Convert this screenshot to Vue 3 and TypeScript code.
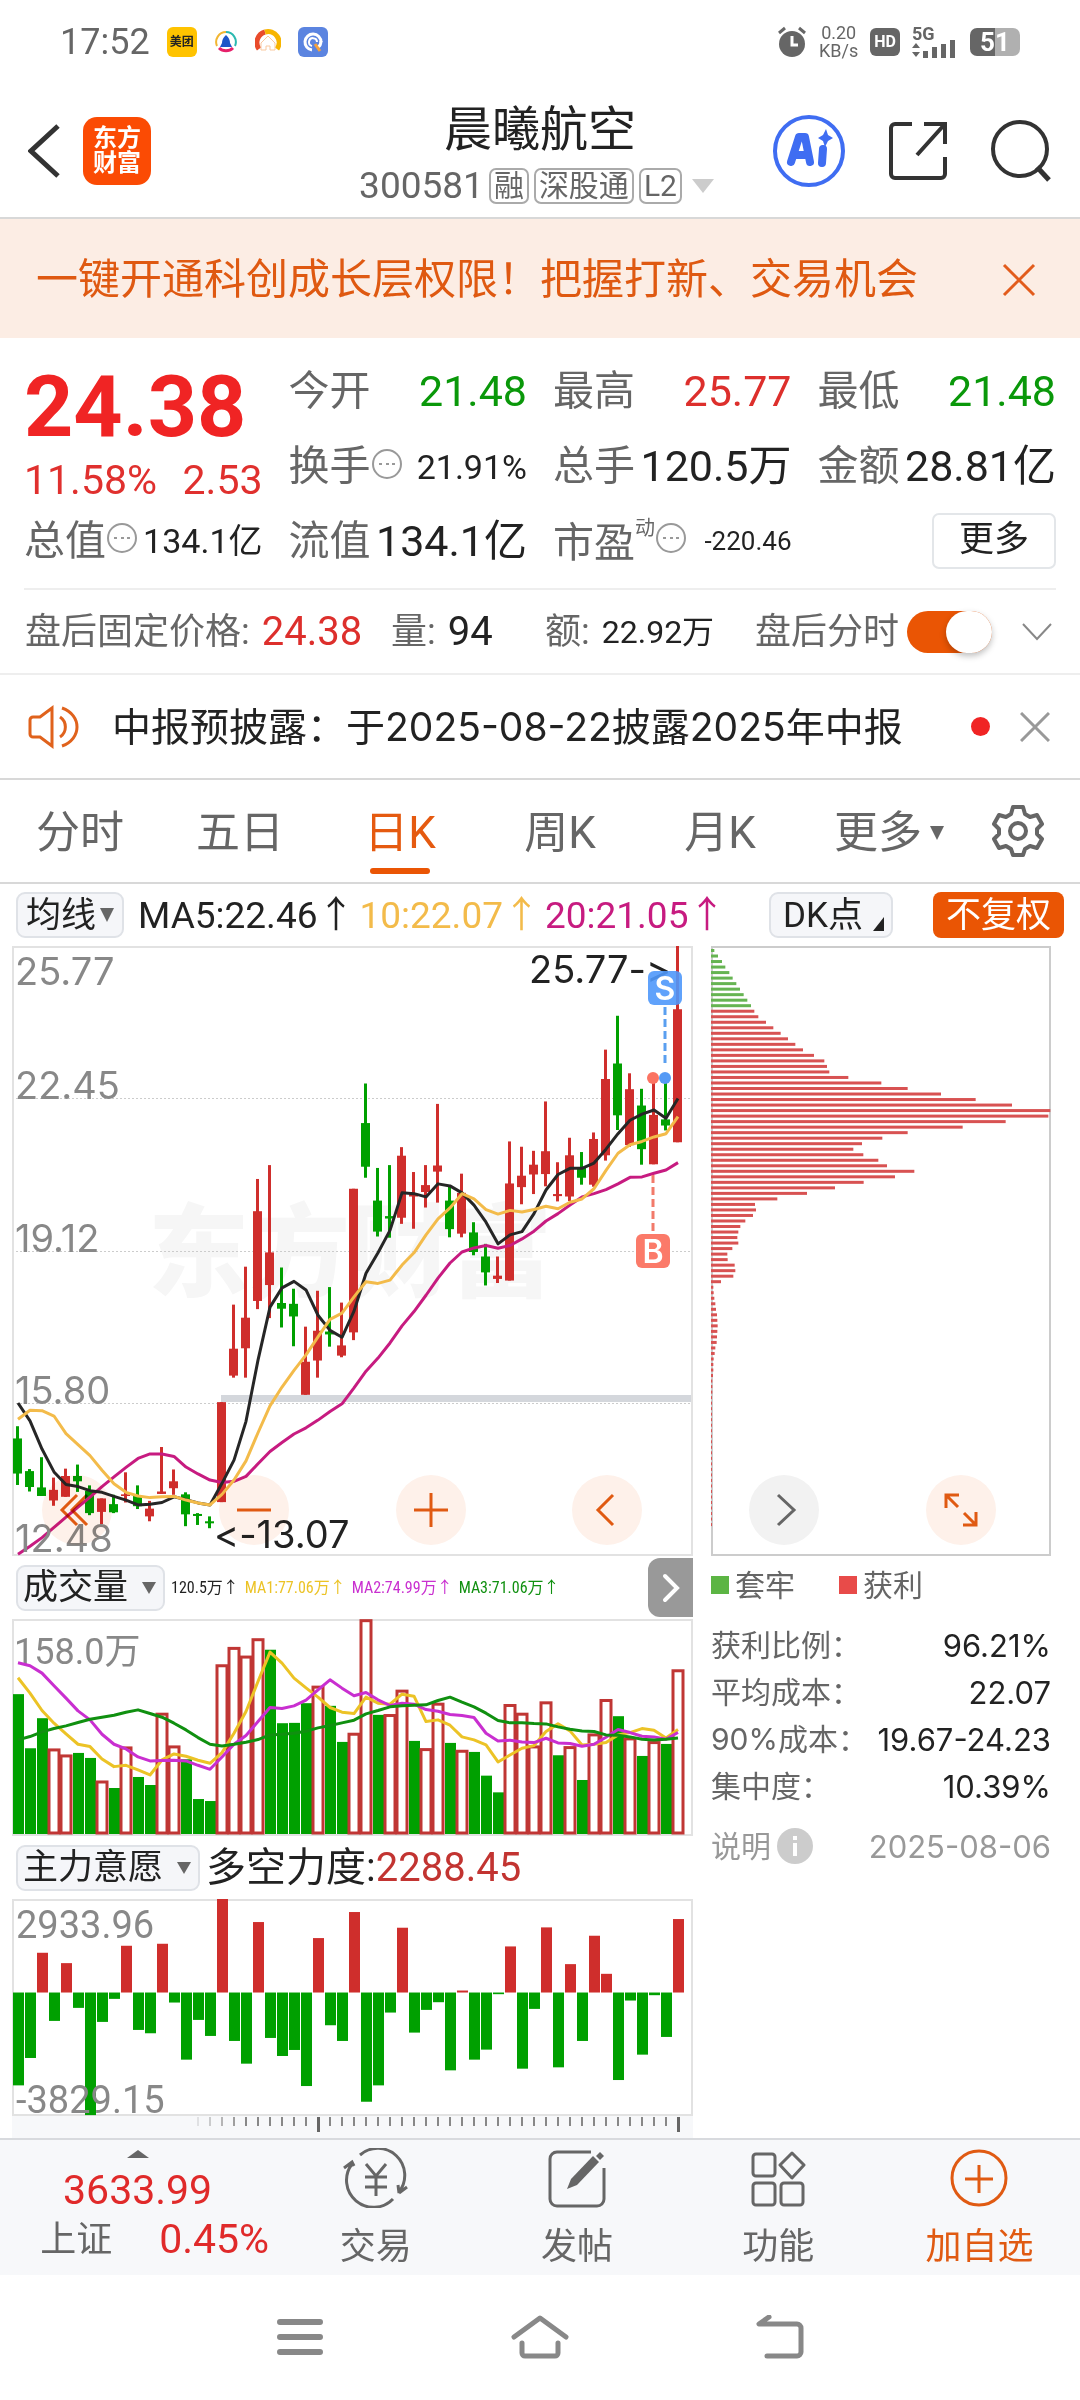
<script setup lang="ts">
import { ref } from 'vue'

type Candle = [top: number, bottom: number, high: number, low: number, up: 0 | 1]

// Every series shares the same column pitch: one column per trading day.
const x = (i: number): number => 6 + i * 12
const priceY = (v: number): number => Math.round((v - 40) * 40.8) / 100
const paneY = (v: number): number => Math.round((v - 178) * 33.4) / 100

const candles: Candle[] = [
  [1247, 1333, 1217, 1361, 0], [1327, 1366, 1322, 1377, 0], [1367, 1388, 1293, 1388, 0], [1373, 1399, 1343, 1412, 1],
  [1339, 1390, 1321, 1390, 1], [1339, 1352, 1311, 1378, 0], [1375, 1430, 1362, 1435, 0], [1394, 1427, 1394, 1457, 1],
  [1408, 1428, 1385, 1430, 0], [1384, 1388, 1330, 1404, 1], [1387, 1413, 1362, 1420, 0], [1419, 1438, 1400, 1450, 1],
  [1377, 1383, 1268, 1383, 1], [1352, 1369, 1323, 1385, 1], [1384, 1433, 1379, 1462, 0], [1432, 1437, 1430, 1459, 0],
  [1450, 1455, 1438, 1467, 0], [1158, 1403, 1158, 1403, 1], [1027, 1093, 919, 1098, 1], [951, 1026, 826, 1098, 1],
  [690, 910, 611, 930, 1], [791, 871, 577, 952, 1], [915, 929, 828, 975, 0], [917, 948, 880, 1021, 0],
  [1059, 1140, 973, 1140, 1], [983, 1056, 885, 1098, 1], [985, 992, 876, 1022, 0], [1019, 1044, 914, 1048, 1],
  [635, 987, 635, 1006, 1], [474, 581, 377, 608, 0], [664, 740, 584, 752, 0], [702, 708, 577, 755, 0],
  [554, 706, 533, 721, 1], [649, 654, 594, 733, 1], [626, 643, 577, 681, 1], [578, 593, 427, 669, 1],
  [664, 734, 627, 754, 0], [645, 745, 598, 754, 1], [742, 790, 717, 798, 0], [801, 840, 770, 872, 0],
  [848, 856, 801, 866, 1], [622, 860, 519, 860, 1], [603, 631, 532, 673, 1], [576, 600, 542, 648, 1],
  [543, 599, 421, 629, 1], [648, 653, 570, 666, 1], [553, 654, 510, 665, 1], [583, 608, 545, 625, 0],
  [513, 625, 497, 630, 1], [366, 553, 294, 566, 1], [328, 455, 211, 491, 0], [391, 528, 352, 532, 1],
  [431, 538, 390, 576, 0], [454, 575, 360, 575, 1], [465, 480, 355, 492, 0], [195, 521, 40, 521, 1],
]

const ma5 = [1160, 1204, 1273, 1329, 1360, 1365, 1375, 1379, 1389, 1398, 1410, 1408, 1404, 1390, 1397, 1405, 1410, 1357, 1300, 1205, 1055, 925, 878, 862, 883, 945, 982, 999, 935, 842, 792, 737, 645, 647, 655, 623, 628, 645, 675, 717, 770, 748, 740, 696, 638, 600, 585, 585, 572, 538, 500, 467, 452, 442, 462, 414]
const ma10 = [1200, 1178, 1179, 1192, 1235, 1262, 1289, 1325, 1358, 1379, 1388, 1392, 1390, 1389, 1398, 1405, 1410, 1384, 1349, 1302, 1233, 1167, 1121, 1080, 1042, 998, 955, 940, 900, 863, 867, 859, 822, 792, 748, 709, 682, 647, 660, 686, 697, 688, 692, 686, 678, 684, 668, 660, 635, 590, 548, 527, 519, 508, 500, 458]
const ma20 = [1531, 1511, 1490, 1465, 1440, 1415, 1391, 1365, 1341, 1318, 1296, 1285, 1285, 1291, 1317, 1334, 1349, 1355, 1352, 1340, 1309, 1279, 1257, 1236, 1221, 1202, 1181, 1162, 1123, 1082, 1050, 1013, 971, 936, 896, 854, 817, 790, 780, 774, 781, 774, 758, 739, 714, 696, 675, 655, 647, 637, 623, 607, 606, 597, 589, 571]

const volume = [403, 565, 475, 567, 585, 579, 594, 663, 684, 561, 651, 675, 460, 558, 598, 717, 723, 315, 263, 289, 237, 270, 490, 489, 430, 379, 438, 546, 520, 180, 465, 464, 391, 543, 566, 430, 549, 571, 576, 647, 697, 434, 460, 558, 426, 586, 560, 660, 522, 419, 469, 534, 588, 545, 552, 330]
const volumeUp = new Set([3, 4, 7, 9, 12, 13, 17, 18, 19, 20, 25, 28, 29, 31, 32, 34, 35, 37, 41, 42, 43, 44, 46, 48, 49, 51, 53, 55])
const vol1 = [354, 400, 452, 490, 522, 553, 560, 597, 620, 616, 630, 645, 600, 582, 589, 601, 610, 578, 520, 455, 365, 277, 310, 355, 384, 412, 443, 457, 461, 412, 430, 433, 403, 409, 485, 480, 496, 531, 540, 555, 606, 585, 565, 557, 515, 492, 513, 555, 553, 548, 525, 518, 506, 511, 534, 509]
const vol2 = [309, 318, 340, 378, 415, 453, 480, 523, 553, 567, 591, 603, 602, 601, 603, 616, 628, 591, 553, 527, 485, 443, 446, 438, 421, 390, 360, 385, 408, 398, 420, 437, 430, 433, 449, 454, 464, 467, 473, 520, 543, 541, 546, 548, 535, 549, 551, 559, 553, 532, 509, 518, 529, 531, 538, 518]
const vol3 = [540, 530, 516, 506, 498, 488, 478, 472, 466, 457, 450, 461, 472, 490, 510, 533, 553, 558, 553, 547, 539, 525, 523, 520, 514, 504, 497, 489, 481, 462, 452, 441, 438, 436, 435, 422, 412, 427, 441, 460, 482, 489, 489, 491, 492, 501, 508, 513, 515, 525, 526, 531, 538, 540, 538, 534]

const force = [736, 654, 339, 543, 370, 504, 825, 546, 477, 318, 570, 580, 312, 488, 659, 540, 588, 178, 603, 671, 247, 594, 648, 630, 738, 295, 556, 603, 217, 785, 736, 518, 264, 578, 510, 487, 691, 452, 659, 629, 463, 320, 686, 507, 263, 682, 373, 603, 288, 402, 720, 482, 644, 466, 591, 238]
const forceZero = 458

const chipLengths = [72, 83, 95, 105, 117, 127, 138, 149, 160, 171, 182, 192, 204, 227, 249, 271, 293, 315, 338, 371, 402, 410, 417, 474, 573, 652, 752, 856, 965, 1080, 1074, 946, 817, 652, 576, 515, 489, 519, 564, 590, 672, 614, 520, 434, 350, 261, 194, 197, 188, 165, 150, 144, 141, 144, 126, 111, 112, 133, 135, 129, 92, 69, 70, 72, 75, 77, 80, 81, 82, 81, 80, 79, 75, 73, 70, 69, 69, 68, 66, 66, 66]
const trappedCount = 11
const chips = Array.from({ length: 105 }, (_, i) => ((chipLengths[i] ?? 65) - 62) / 3)

const line = (values: number[], y: (v: number) => number): string =>
  values.map((v, i) => `${x(i)},${y(v)}`).join(' ')

const ticks = Array.from({ length: 41 }, (_, i) => ({
  x: 186 + i * 12,
  long: i === 10 || i === 40,
  opacity: Math.min(1, 0.2 + i * 0.2),
}))

const tabs = ['分时', '五日', '日K', '周K', '月K']
const activeTab = ref('日K')
const afterHours = ref(true)

const stats = [
  ['获利比例：', '96.21%'],
  ['平均成本：', '22.07'],
  ['90%成本：', '19.67-24.23'],
  ['集中度：', '10.39%'],
]
</script>

<template>
  <div class="page">
    <div class="status">
      <span class="clock">17:52</span>
      <span class="meituan">美团</span>
      <svg width="24" height="36" viewBox="0 0 24 36" fill="none">
        <path d="M12 8a10 10 0 0 0-9 14" stroke="#f2b632" stroke-width="2" />
        <path d="M12 8a10 10 0 0 1 9 14" stroke="#2bb9b0" stroke-width="2" />
        <path d="M5 24a10 10 0 0 0 14 0" stroke="#e6206a" stroke-width="3" />
        <path d="M12 11c3 3 4 5 4 8l2 4H6l2-4c0-3 1-5 4-8z" fill="#1c56c8" />
      </svg>
      <svg width="26" height="36" viewBox="0 0 26 36" fill="none">
        <path d="M4 25A11 11 0 0 1 10 8" stroke="#e94b2b" stroke-width="5" />
        <path d="M10 8a11 11 0 0 1 12 17" stroke="#f7b500" stroke-width="5" />
        <path d="M6 19l7-7 7 7v7h-5v-4h-4v4H6z" fill="#fff" stroke="#f9c9a0" stroke-width="1" />
      </svg>
      <svg width="30" height="30" viewBox="0 0 30 30" fill="none">
        <rect width="30" height="30" rx="6" fill="#5b84e0" />
        <path d="M14 23a8 8 0 1 1 9-8" stroke="#fff" stroke-width="3" />
        <path d="M14 19a4 4 0 1 1 5-4" stroke="#fff" stroke-width="2" />
        <path d="M23 14c0 3-1 5-3 6" stroke="#fff" stroke-width="3" />
        <path d="M17 17l5 7" stroke="#f7a23b" stroke-width="3" />
      </svg>
      <div class="status-right">
        <svg width="30" height="32" viewBox="0 0 30 32">
          <path d="M2 7l6-5M28 7l-6-5" stroke="#666" stroke-width="3" />
          <circle cx="15" cy="18" r="13" fill="#666" />
          <path d="M15 10v9h6" fill="none" stroke="#fff" stroke-width="3" />
        </svg>
        <span class="speed">0.20<br />KB/s</span>
        <span class="hd">HD</span>
        <svg class="signal" width="46" height="34" viewBox="0 0 46 34" fill="#666">
          <text x="0" y="15" class="five-g">5G</text>
          <path d="M4 18l4 5H0zM4 32l-4-5h8z" />
          <path d="M11 26h5v7h-5zM20 22h5v11h-5zM29 19h5v14h-5zM38 15h5v18h-5z" />
        </svg>
        <span class="battery"><b>51</b></span>
      </div>
    </div>

    <header class="header">
      <button class="bare" aria-label="返回">
        <svg width="32" height="54" viewBox="0 0 32 54" fill="none">
          <path d="M30 2L3 27l27 25" stroke="#333" stroke-width="5" />
        </svg>
      </button>
      <a class="logo" href="#">东方<br />财富</a>
      <div class="title">
        <h1>晨曦航空</h1>
        <div class="code">
          <span>300581</span><i>融</i><i>深股通</i><i>L2</i>
          <svg width="24" height="16" viewBox="0 0 24 16"><path d="M1 1h22L12 15z" fill="#ccc" /></svg>
        </div>
      </div>
      <div class="tools">
        <button class="bare" aria-label="AI">
          <svg width="74" height="74" viewBox="0 0 74 74" fill="none">
            <circle cx="37" cy="37" r="34" stroke="#3f6df2" stroke-width="4" />
            <path d="M19 48l8-25h6l5 25M24 41h11" stroke="#3f6df2" stroke-width="8" stroke-linejoin="round" stroke-linecap="round" />
            <path d="M51 35l-1 14" stroke="#3f6df2" stroke-width="8" stroke-linecap="round" />
            <path d="M54 15l2 6 5 3-5 3-3 6-2-6-5-3 5-3z" fill="#3f6df2" />
          </svg>
        </button>
        <button class="bare" aria-label="分享">
          <svg width="60" height="60" viewBox="0 0 60 60" fill="none" stroke="#333" stroke-width="4">
            <path d="M24 3H7a4 4 0 0 0-4 4v46a4 4 0 0 0 4 4h46a4 4 0 0 0 4-4V36" />
            <path d="M36 3h21v20M56 4L29 34" />
          </svg>
        </button>
        <button class="bare" aria-label="搜索">
          <svg width="62" height="62" viewBox="0 0 62 62" fill="none" stroke="#333" stroke-width="4">
            <circle cx="30" cy="29" r="27" />
            <path d="M47 47l12 13" stroke-width="5" />
          </svg>
        </button>
      </div>
    </header>

    <div class="banner">
      <a href="#">一键开通科创成长层权限！把握打新、交易机会</a>
      <button class="bare" aria-label="关闭">
        <svg width="34" height="34" viewBox="0 0 34 34"><path d="M2 2l30 30M32 2L2 32" stroke="#e25c1c" stroke-width="3" /></svg>
      </button>
    </div>

    <section class="quote">
      <div class="last">
        <strong>24.38</strong>
        <div class="change"><span>11.58%</span><span>2.53</span></div>
      </div>
      <div class="cell"><span>今开</span><b class="green">21.48</b></div>
      <div class="cell"><span>最高</span><b class="red">25.77</b></div>
      <div class="cell"><span>最低</span><b class="green">21.48</b></div>
      <div class="cell">
        <span>换手</span>
        <svg class="more-dot" viewBox="0 0 32 32"><circle cx="16" cy="16" r="14" /><path d="M8 16h3M15 16h3M21 16h3" /></svg>
        <b class="mid">21.91%</b>
      </div>
      <div class="cell"><span>总手</span><b>120.5万</b></div>
      <div class="cell"><span>金额</span><b>28.81亿</b></div>
      <div class="cell">
        <span>总值</span>
        <svg class="more-dot" viewBox="0 0 32 32"><circle cx="16" cy="16" r="14" /><path d="M8 16h3M15 16h3M21 16h3" /></svg>
        <b class="mid">134.1亿</b>
      </div>
      <div class="cell"><span>流值</span><b>134.1亿</b></div>
      <div class="cell">
        <span>市盈<sup>动</sup></span>
        <svg class="more-dot" viewBox="0 0 32 32"><circle cx="16" cy="16" r="14" /><path d="M8 16h3M15 16h3M21 16h3" /></svg>
        <b class="small">-220.46</b>
      </div>
      <div class="cell end"><button class="more">更多</button></div>
    </section>

    <section class="after">
      <div>盘后固定价格:<b class="red">24.38</b></div>
      <div>量:<b>94</b></div>
      <div>额:<b class="small">22.92万</b></div>
      <label class="switch">盘后分时<input v-model="afterHours" type="checkbox" role="switch" /></label>
      <button class="bare" aria-label="展开">
        <svg width="30" height="18" viewBox="0 0 30 18" fill="none"><path d="M1 1l14 15L29 1" stroke="#888" stroke-width="2" /></svg>
      </button>
    </section>

    <section class="notice">
      <svg width="52" height="44" viewBox="0 0 52 44" fill="none" stroke="#e0621c" stroke-width="3">
        <path d="M24 3v38L12 32H5a3 3 0 0 1-3-3V15a3 3 0 0 1 3-3h7z" />
        <path d="M32 12a12 12 0 0 1 0 20M34 3c20 7 20 31 0 38" />
      </svg>
      <a href="#">中报预披露：于2025-08-22披露2025年中报</a>
      <i class="dot"></i>
      <button class="bare" aria-label="关闭">
        <svg width="30" height="30" viewBox="0 0 30 30"><path d="M1 1l28 28M29 1L1 29" stroke="#999" stroke-width="3" /></svg>
      </button>
    </section>

    <nav class="tabs">
      <button v-for="t in tabs" :key="t" :class="{ on: t === activeTab }" @click="activeTab = t">{{ t }}</button>
      <button class="tab-more">更多<svg width="14" height="14" viewBox="0 0 14 14"><path d="M0 0h14L7 14z" fill="#666" /></svg></button>
      <button class="gear" aria-label="设置">
        <svg width="52" height="52" viewBox="0 0 52 52" fill="none" stroke="#666" stroke-width="4" stroke-linejoin="round">
          <path d="M21 2h10l2 7 5 3 7-2 5 9-5 5v5l5 5-5 9-7-2-5 3-2 6H21l-2-6-5-3-7 2-5-9 5-5v-5l-5-5 5-9 7 2 5-3z" />
          <circle cx="26" cy="26" r="8" />
        </svg>
      </button>
    </nav>

    <div class="ma-row">
      <button class="pick">均线<svg width="14" height="14" viewBox="0 0 14 14"><path d="M0 0h14L7 14z" fill="#666" /></svg></button>
      <span class="ma-values"><span>MA5:22.46↑</span><span class="y">10:22.07↑</span><span class="m">20:21.05↑</span></span>
      <button class="pick dk">DK点<svg width="11" height="14" viewBox="0 0 11 14"><path d="M11 0v14H0z" fill="#222" /></svg></button>
      <button class="adjust">不复权</button>
    </div>

    <main class="charts">
      <div class="left">
        <svg class="chart" viewBox="0 0 681 610">
          <text x="136" y="343" class="watermark">东方财富</text>
          <path d="M0 152.5h681M0 305.5h681M0 457.5h681" stroke="#ccc" stroke-dasharray="2 2" />
          <rect x="209" y="449" width="471" height="7" fill="#d4d7dc" />
          <rect x="1" y="1" width="679" height="608" fill="none" stroke="#e2e2e2" stroke-width="2" />
          <g v-for="(c, i) in candles" :key="i" :fill="c[4] ? '#cf2e2c' : '#00a000'">
            <rect :x="x(i) - 2" :y="priceY(c[2])" width="3" :height="priceY(c[3]) - priceY(c[2])" />
            <rect :x="x(i) - 5" :y="priceY(c[0])" width="9" :height="priceY(c[1]) - priceY(c[0])" />
          </g>
          <g fill="none" stroke-width="3" stroke-linejoin="round">
            <polyline :points="line(ma20, priceY)" stroke="#c71b80" />
            <polyline :points="line(ma5, priceY)" stroke="#262626" />
            <polyline :points="line(ma10, priceY)" stroke="#f3bb4a" />
          </g>
          <g class="axis wide">
            <text x="3" y="39">25.77</text>
            <text x="3" y="153">22.45</text>
            <text x="3" y="306">19.12</text>
            <text x="3" y="458">15.80</text>
            <text x="3" y="606">12.48</text>
          </g>
          <g class="mark">
            <text x="517" y="37">25.77-&gt;</text>
            <text x="202" y="602">&lt;-13.07</text>
          </g>
          <g stroke-width="3" stroke-dasharray="8 4">
            <path d="M653 61v58" stroke="#5a9ff0" />
            <path d="M641 229v58" stroke="#f27a6a" />
          </g>
          <circle cx="641" cy="132" r="6" fill="#fb7362" />
          <circle cx="653" cy="132" r="6" fill="#559af5" />
          <rect x="636" y="25" width="34" height="34" rx="6" fill="#4f98fb" fill-opacity=".9" />
          <rect x="624" y="288" width="34" height="34" rx="6" fill="#fb7a69" />
          <text x="653" y="54" class="badge">S</text>
          <text x="641" y="317" class="badge">B</text>
        </svg>

        <div class="pane-head">
          <button class="pick wide-pick">成交量<svg width="14" height="12" viewBox="0 0 14 12"><path d="M0 0h14L7 12z" fill="#666" /></svg></button>
          <span class="vol-values"><span>120.5万↑</span><span class="y2">MA1:77.06万↑</span><span class="p">MA2:74.99万↑</span><span class="g">MA3:71.06万↑</span></span>
          <button class="next" aria-label="下一项">
            <svg width="18" height="30" viewBox="0 0 18 30" fill="none"><path d="M3 3l12 12L3 27" stroke="#fff" stroke-width="4" stroke-linecap="round" /></svg>
          </button>
        </div>
        <svg class="chart" viewBox="0 0 681 217">
          <rect x="1" y="1" width="679" height="215" fill="none" stroke="#e2e2e2" stroke-width="2" />
          <text x="2" y="45" class="axis vol-max">158.0万</text>
          <template v-for="(v, i) in volume" :key="i">
            <rect v-if="volumeUp.has(i)" :x="x(i) - 5" :y="paneY(v) + 1" width="10" :height="213 - paneY(v)" fill="#fff" stroke="#c03634" stroke-width="3" />
            <rect v-else :x="x(i) - 5" :y="paneY(v)" width="11" :height="215 - paneY(v)" fill="#00a000" />
          </template>
          <g fill="none" stroke-width="3" stroke-linejoin="round">
            <polyline :points="line(vol1, paneY)" stroke="#ecc326" />
            <polyline :points="line(vol2, paneY)" stroke="#c92fd0" />
            <polyline :points="line(vol3, paneY)" stroke="#109010" />
          </g>
        </svg>

        <div class="pane-head">
          <button class="pick wide-pick">主力意愿<svg width="14" height="12" viewBox="0 0 14 12"><path d="M0 0h14L7 12z" fill="#666" /></svg></button>
          <span class="force">多空力度:<b>2288.45</b></span>
        </div>
        <svg class="chart" viewBox="0 0 681 217">
          <rect x="1" y="1" width="679" height="215" fill="none" stroke="#e2e2e2" stroke-width="2" />
          <rect
            v-for="(v, i) in force" :key="i" :x="x(i) - 5" :y="paneY(Math.min(v, forceZero))" width="11"
            :height="Math.abs(paneY(v) - paneY(forceZero))" :fill="v < forceZero ? '#cf2e2c' : '#00a000'"
          />
          <text x="4" y="39" class="axis">2933.96</text>
          <text x="4" y="214" class="axis">-3829.15</text>
        </svg>
        <svg class="chart ruler" viewBox="0 0 681 22">
          <rect
            v-for="t in ticks" :key="t.x" :x="t.x - 1" y="1" :width="t.long ? 3 : 2" :height="t.long ? 15 : 9"
            :fill="t.long ? '#666' : '#888'" :opacity="t.opacity"
          />
        </svg>
      </div>

      <div class="right">
        <svg class="chart" viewBox="0 0 340 610">
          <rect x="1" y="1" width="338" height="608" fill="none" stroke="#ccc" stroke-width="2" />
          <rect
            v-for="(w, i) in chips" :key="i" x="0" :y="3 + i * 5.52" :width="w" height="3"
            :fill="i < trappedCount ? '#66b452' : '#d85252'"
          />
        </svg>
        <div class="legend"><span class="trapped">套牢</span><span class="profit">获利</span></div>
        <dl>
          <div v-for="s in stats" :key="s[0]"><dt>{{ s[0] }}</dt><dd>{{ s[1] }}</dd></div>
        </dl>
        <div class="explain">
          说明
          <svg width="36" height="36" viewBox="0 0 36 36"><circle cx="18" cy="18" r="18" fill="#ccc" /><path d="M18 8v4M18 15v13" stroke="#fff" stroke-width="4" /></svg>
          <time>2025-08-06</time>
        </div>
      </div>

      <div class="floats">
        <button aria-label="最早"><svg viewBox="0 0 70 70"><path d="M35 20L20 35l15 15M45 20L30 35l15 15" /></svg></button>
        <button aria-label="缩小"><svg viewBox="0 0 70 70"><path d="M18 35h34" /></svg></button>
        <button aria-label="放大"><svg viewBox="0 0 70 70"><path d="M18 35h34M35 18v34" /></svg></button>
        <button aria-label="向左"><svg viewBox="0 0 70 70"><path d="M41 20L26 35l15 15" /></svg></button>
        <button class="gray" aria-label="向右"><svg viewBox="0 0 70 70"><path d="M29 20l16 15-16 15" /></svg></button>
        <button aria-label="全屏"><svg viewBox="0 0 70 70"><path d="M33 20H20v13M20 20l12 12M37 50h13V37M50 50L38 38" /></svg></button>
      </div>
    </main>

    <footer class="bottom">
      <a class="index" href="#">
        <svg width="22" height="8" viewBox="0 0 22 8"><path d="M0 8L11 0l11 8z" fill="#666" /></svg>
        <b>3633.99</b>
        <span>上证<b>0.45%</b></span>
      </a>
      <button>
        <svg width="66" height="60" viewBox="0 0 66 60" fill="none" stroke="#666" stroke-width="3">
          <path d="M17 7a27 27 0 0 1 39 37M50 51A27 27 0 0 1 9 16M1 20l8-6 2 4M56 45l8-6M56 45l-1-8" />
          <path d="M23 16l10 12 10-12M22 29h22M22 39h22M33 28v20" />
        </svg>
        交易
      </button>
      <button>
        <svg width="60" height="60" viewBox="0 0 60 60" fill="none" stroke="#666" stroke-width="3">
          <path d="M44 4H10a7 7 0 0 0-7 7v40a7 7 0 0 0 7 7h40a7 7 0 0 0 7-7V20" />
          <path d="M20 41l4-10L46 8l6 6-22 23z" fill="#666" stroke="none" />
          <path d="M49 8l4-4 4 4-4 4z" fill="#666" stroke="none" />
        </svg>
        发帖
      </button>
      <button>
        <svg width="56" height="60" viewBox="0 0 56 60" fill="none" stroke="#666" stroke-width="3" stroke-linejoin="round">
          <rect x="3" y="6" width="22" height="22" rx="3" />
          <rect x="3" y="35" width="22" height="22" rx="3" />
          <rect x="31" y="35" width="22" height="22" rx="3" />
          <path d="M42 5l12 12-12 13-12-13z" />
        </svg>
        功能
      </button>
      <button class="add">
        <svg width="60" height="60" viewBox="0 0 60 60" fill="none" stroke="#e05a12" stroke-width="3">
          <circle cx="30" cy="30" r="27" />
          <path d="M16 31h28M30 17v28" />
        </svg>
        加自选
      </button>
    </footer>

    <nav class="system">
      <button class="bare" aria-label="菜单">
        <svg width="46" height="46" viewBox="0 0 46 46" fill="none" stroke="#888" stroke-width="6" stroke-linecap="round"><path d="M3 7h40M3 22h40M3 37h40" /></svg>
      </button>
      <button class="bare" aria-label="主页">
        <svg width="58" height="46" viewBox="0 0 58 46" fill="none" stroke="#888" stroke-width="5" stroke-linecap="round" stroke-linejoin="round">
          <path d="M3 22L29 3l26 19" />
          <path d="M11 28v10a3 3 0 0 0 3 3h30a3 3 0 0 0 3-3V28" />
        </svg>
      </button>
      <button class="bare" aria-label="后退">
        <svg width="50" height="46" viewBox="0 0 50 46" fill="none" stroke="#888" stroke-width="5" stroke-linecap="round" stroke-linejoin="round">
          <path d="M14 2L4 9h38a4 4 0 0 1 4 4v24a4 4 0 0 1-4 4H12" />
        </svg>
      </button>
    </nav>
  </div>
</template>

<style>
body {
  background: #fff;
}
</style>

<style scoped>
* {
  box-sizing: border-box;
}

.page {
  font-family: Roboto, 'Noto Sans CJK SC', sans-serif;
  font-size: 36px;
  line-height: 1;
  color: #222;
}

button {
  font: inherit;
  color: inherit;
  border: 0;
  padding: 0;
  background: none;
  cursor: pointer;
}

svg {
  display: block;
  flex: none;
}

a {
  color: inherit;
  text-decoration: none;
}

b,
i {
  font-weight: 400;
  font-style: normal;
}

.red {
  color: #dd2f2c;
}

.green {
  color: #0a980a;
}

/* Phone status bar */
.status {
  display: flex;
  align-items: center;
  gap: 17px;
  height: 84px;
  padding: 0 60px;
  color: #666;
}

.meituan {
  width: 30px;
  padding: 9px 0;
  border-radius: 6px;
  background: #ffc300;
  color: #222;
  font-size: 12px;
  font-weight: 700;
  text-align: center;
}

.status-right {
  display: flex;
  align-items: center;
  gap: 12px;
  margin-left: auto;
}

.speed {
  font-size: 18px;
  text-align: center;
}

.hd {
  padding: 6px 4px;
  border-radius: 6px;
  background: #666;
  color: #fff;
  font-size: 16px;
  font-weight: 700;
}

.signal {
  overflow: visible;
}

.five-g {
  font-size: 18px;
  font-weight: 700;
}

.battery {
  width: 50px;
  border-radius: 7px;
  background: linear-gradient(90deg, #666 51%, #b0b0b0 51%);
  color: #fff;
  font-size: 26px;
  line-height: 28px;
  text-align: center;
}

.battery b {
  font-weight: 700;
}

/* Title bar */
.header {
  display: grid;
  grid-template-columns: 1fr auto 1fr;
  align-items: center;
  height: 135px;
  padding: 0 28px;
  border-bottom: 2px solid #d8d8d8;
}

.header > .bare {
  grid-area: 1 / 1;
  justify-self: start;
}

.logo {
  grid-area: 1 / 1;
  justify-self: start;
  width: 68px;
  margin-left: 55px;
  padding: 9px 0;
  border-radius: 14px;
  background: #fb4b04;
  color: #fff;
  font-size: 24px;
  font-weight: 700;
  line-height: 25px;
  text-align: center;
}

.title {
  display: flex;
  flex-direction: column;
  align-items: center;
  gap: 10px;
  padding-top: 6px;
}

h1 {
  margin: 0;
  font-size: 48px;
  font-weight: 400;
  line-height: 54px;
}

.code {
  display: flex;
  align-items: center;
  gap: 5px;
  margin-left: -6px;
  color: #666;
  font-size: 37px;
}

.code i {
  padding: 1px 3px;
  border: 2px solid #aaa;
  border-radius: 7px;
  font-size: 30px;
}

.code svg {
  margin-left: 4px;
}

.tools {
  display: flex;
  align-items: center;
  justify-content: flex-end;
  gap: 42px;
}

.banner {
  display: flex;
  align-items: center;
  justify-content: space-between;
  height: 119px;
  padding: 2px 44px 0 36px;
  background: #fcede4;
  color: #df5911;
  font-size: 42px;
}

/* Quote figures */
.quote {
  display: grid;
  grid-template-columns: repeat(4, 1fr);
  grid-template-rows: 75px 75px 74px;
  column-gap: 26px;
  margin: 0 24px;
  padding: 16px 0 10px;
  border-bottom: 2px solid #eee;
  align-items: center;
}

.last {
  grid-row: span 2;
  display: flex;
  flex-direction: column;
  gap: 10px;
  padding-top: 6px;
  color: #e0302e;
}

.last strong {
  color: #f02424;
  font-size: 86px;
}

.change {
  display: flex;
  justify-content: space-between;
  font-size: 41px;
}

.cell {
  display: flex;
  align-items: center;
  color: #666;
  font-size: 41px;
  white-space: nowrap;
}

.cell b {
  margin-left: auto;
  font-size: 43px;
}

.cell b:not([class]),
.mid,
.small {
  color: #222;
}

.cell .mid {
  font-size: 34px;
}

.cell .small {
  font-size: 26px;
}

.cell sup {
  font-size: 20px;
  line-height: 1;
  vertical-align: 22px;
}

.more-dot {
  width: 32px;
  height: 32px;
  margin-bottom: 6px;
  fill: none;
  stroke: #999;
  stroke-width: 2;
}

.end {
  justify-content: flex-end;
}

.more {
  padding: 7px 25px 10px;
  border: 2px solid #e3e6e9;
  border-radius: 7px;
  color: #222;
  font-size: 35px;
}

.after {
  display: grid;
  grid-template-columns: 366fr 154fr 210fr 267fr 30fr;
  align-items: center;
  height: 85px;
  padding: 0 28px 0 25px;
  border-bottom: 2px solid #eee;
  color: #666;
  white-space: nowrap;
}

.after div,
.switch {
  display: flex;
  align-items: center;
}

.after b {
  margin-left: 12px;
  font-size: 40px;
}

.after b:not(.red) {
  color: #222;
}

.after .small {
  font-size: 32px;
}

.switch input {
  appearance: none;
  display: flex;
  width: 85px;
  height: 42px;
  margin: 0 0 0 8px;
  border-radius: 21px;
  background: #ccc;
}

.switch input::before {
  content: '';
  width: 46px;
  height: 42px;
  border-radius: 21px;
  background: #fff;
  box-shadow: 0 3px 6px rgba(0, 0, 0, 0.25);
}

.switch input:checked {
  justify-content: flex-end;
  background: #ea5504;
}

.notice {
  display: flex;
  align-items: center;
  height: 105px;
  padding: 0 30px 0 28px;
  border-bottom: 2px solid #d8d8d8;
  font-family: Inter, 'Noto Sans CJK SC', sans-serif;
  font-size: 39px;
}

.notice a {
  margin-left: 32px;
  white-space: nowrap;
}

.dot {
  width: 19px;
  height: 19px;
  margin: 0 30px 0 auto;
  border-radius: 50%;
  background: #f02424;
}

/* Period tabs */
.tabs {
  display: grid;
  grid-template-columns: repeat(6, 4fr) 3fr;
  height: 104px;
  border-bottom: 2px solid #d8d8d8;
  color: #666;
  font-size: 44px;
}

.tabs button {
  position: relative;
  display: flex;
  align-items: center;
  justify-content: center;
  padding-top: 4px;
}

.tabs .on {
  color: #e55a10;
}

.tabs .on::after {
  content: '';
  position: absolute;
  bottom: 8px;
  width: 60px;
  height: 6px;
  border-radius: 3px;
  background: #ea5504;
}

.tabs .tab-more {
  gap: 8px;
  padding-left: 18px;
}

.tabs .gear {
  padding: 0 4px 0 0;
}

.ma-row {
  display: flex;
  align-items: center;
  height: 62px;
  padding: 0 16px;
}

.pick {
  display: flex;
  align-items: center;
  gap: 4px;
  height: 46px;
  padding: 0 8px;
  border: 2px solid #dfe2e7;
  border-radius: 9px;
  background: #f5f6f9;
  font-size: 35px;
  white-space: nowrap;
}

.ma-values {
  display: flex;
  gap: 5px;
  margin: 0 auto 0 14px;
  font-size: 37px;
}

.y {
  color: #f3bb4a;
}

.m {
  color: #c71b80;
}

.dk {
  gap: 10px;
  padding: 0 7px 0 12px;
}

.dk svg {
  margin-top: 18px;
}

.adjust {
  height: 46px;
  margin-left: 40px;
  padding: 0 13px;
  border-radius: 8px;
  background: #ea5504;
  color: #fff;
  font-size: 35px;
}

/* Charts */
.charts {
  position: relative;
  display: grid;
  grid-template-columns: 681fr 340fr;
  gap: 18px;
  padding: 0 29px 0 12px;
}

.chart {
  width: 100%;
  height: auto;
  overflow: visible;
}

.ruler {
  background: #f7f8fa;
}

.watermark {
  fill: #f6f6f6;
  font-size: 101px;
  font-weight: 900;
}

.axis {
  fill: #888;
  font-size: 38px;
}

.vol-max {
  font-size: 36px;
}

.wide {
  font-family: Inter, sans-serif;
}

.mark {
  fill: #222;
  font-family: Inter, sans-serif;
  font-size: 38px;
  font-feature-settings: 'calt' 0;
}

.badge {
  fill: #fff;
  font-family: Inter, sans-serif;
  font-size: 32px;
  font-weight: 600;
  text-anchor: middle;
}

.pane-head {
  display: flex;
  align-items: center;
  height: 63px;
  padding-left: 4px;
}

.wide-pick {
  gap: 14px;
  padding: 0 7px 0 5px;
}

.vol-values {
  display: flex;
  gap: 6px;
  margin-left: 6px;
  font-family: 'Roboto Condensed', Roboto, 'Noto Sans CJK SC', sans-serif;
  font-size: 16px;
  white-space: nowrap;
}

.y2 {
  color: #ecc326;
}

.p {
  color: #c92fd0;
}

.g {
  color: #109010;
}

.next {
  display: flex;
  align-items: center;
  justify-content: center;
  width: 45px;
  height: 59px;
  margin-left: auto;
  border-radius: 12px 0 0 12px;
  background: #999;
}

.force {
  margin-left: 6px;
  font-size: 40px;
}

.force b {
  color: #c23431;
}

.right {
  font-family: Inter, 'Noto Sans CJK SC', sans-serif;
  font-size: 30px;
  color: #666;
}

.legend {
  display: flex;
  gap: 44px;
  padding: 14px 0;
}

.legend span {
  display: flex;
  align-items: center;
  gap: 6px;
}

.legend span::before {
  content: '';
  width: 18px;
  height: 18px;
  background: #5cb544;
}

.legend .profit::before {
  background: #e84b49;
}

dl {
  margin: 8px 0 0;
}

dl div {
  display: flex;
  justify-content: space-between;
  line-height: 47px;
  white-space: nowrap;
}

dt,
dd {
  margin: 0;
}

dd {
  color: #222;
  font-size: 31px;
}

.explain {
  display: flex;
  align-items: center;
  gap: 6px;
  margin-top: 18px;
  color: #999;
}

.explain time {
  margin-left: auto;
  font-size: 31px;
}

.floats {
  position: absolute;
  top: 529px;
  left: 42px;
  right: 84px;
  display: flex;
  justify-content: space-between;
  mix-blend-mode: multiply;
}

.floats button {
  width: 70px;
  border-radius: 50%;
  background: #fef1ea;
}

.floats svg {
  fill: none;
  stroke: #e05a12;
  stroke-width: 3;
}

.floats .gray {
  background: #f2f2f2;
}

.floats .gray svg {
  stroke: #666;
}

/* Bottom bar */
.bottom {
  display: flex;
  height: 137px;
  border-top: 2px solid #d8dade;
  background: #f7f8fa;
  color: #666;
}

.bottom button {
  display: flex;
  flex-direction: column;
  align-items: center;
  gap: 21px;
  flex: 201;
  padding-top: 8px;
}

.index {
  display: flex;
  flex-direction: column;
  align-items: center;
  flex: 275;
  padding-top: 10px;
}

.index b {
  margin-top: 12px;
  color: #e02a2a;
  font-size: 41px;
}

.index span {
  display: flex;
  align-items: center;
  gap: 47px;
  margin: 8px 0 0 34px;
}

.index span b {
  margin: 0;
}

.bottom .add {
  color: #e05a12;
}

.system {
  display: flex;
  justify-content: center;
  height: 125px;
}

.system button {
  display: flex;
  align-items: center;
  justify-content: center;
  width: 22.2%;
}
</style>
